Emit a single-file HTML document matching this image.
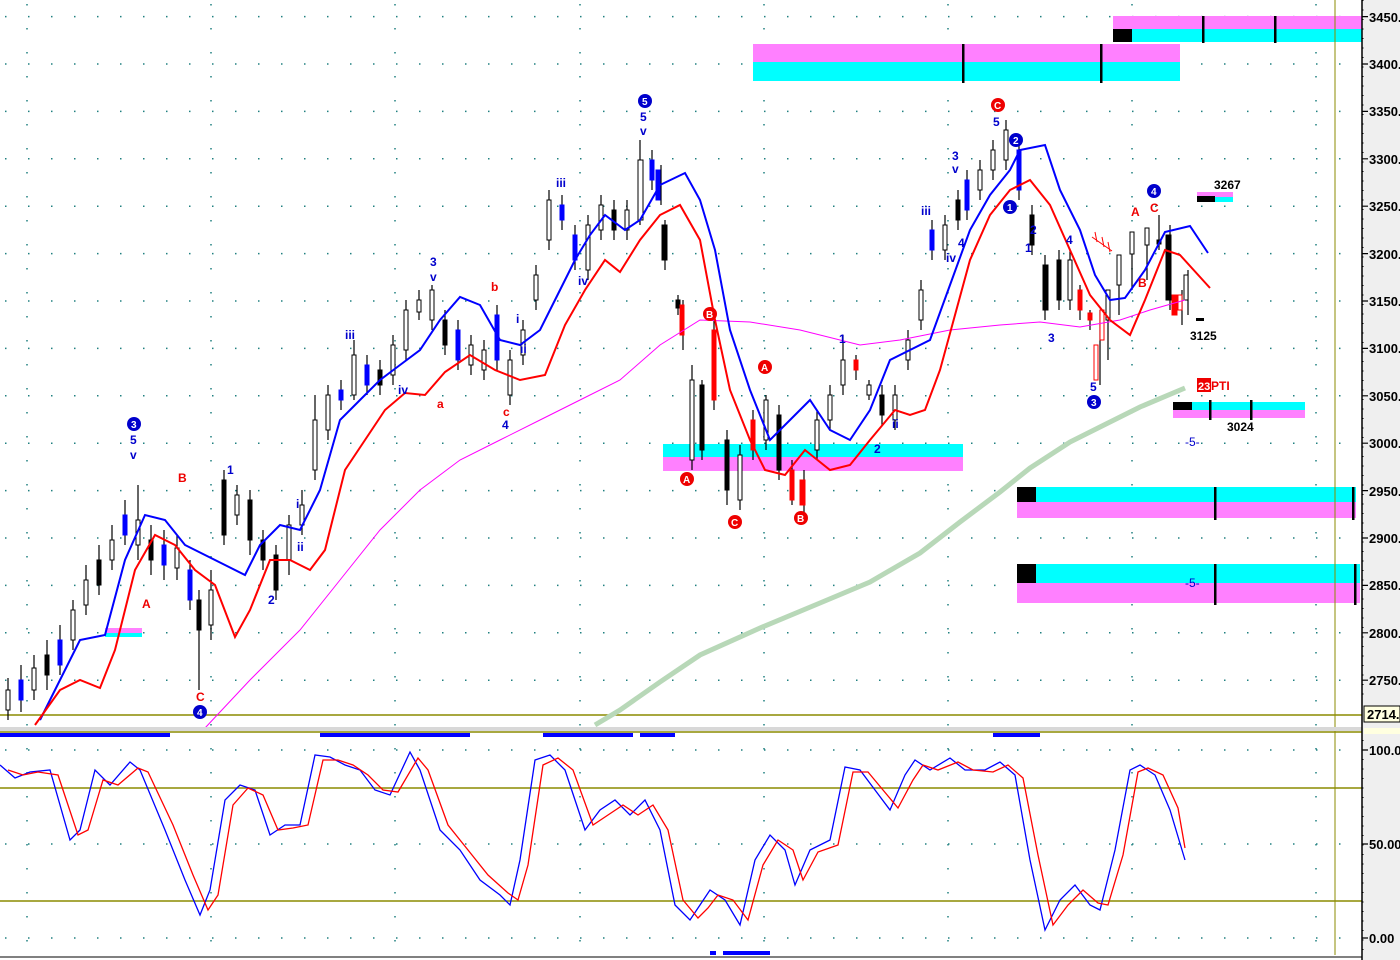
<!DOCTYPE html>
<html><head><meta charset="utf-8">
<style>
html,body{margin:0;padding:0;background:#fff;}
svg{display:block;font-family:"Liberation Sans",Arial,sans-serif;}
.ax{font-size:13px;font-weight:bold;fill:#000;}
.lb{font-size:12px;font-weight:bold;}
</style></head>
<body>
<svg width="1400" height="960" viewBox="0 0 1400 960" xmlns="http://www.w3.org/2000/svg">
<rect width="1400" height="960" fill="#fff"/>
<g stroke="#208080" stroke-width="1.5" stroke-dasharray="1.5 21.5">
<line x1="5" y1="16.6" x2="1362" y2="16.6"/><line x1="5" y1="64" x2="1362" y2="64"/><line x1="5" y1="111.4" x2="1362" y2="111.4"/><line x1="5" y1="158.8" x2="1362" y2="158.8"/><line x1="5" y1="206.2" x2="1362" y2="206.2"/><line x1="5" y1="253.6" x2="1362" y2="253.6"/><line x1="5" y1="301" x2="1362" y2="301"/><line x1="5" y1="348.4" x2="1362" y2="348.4"/><line x1="5" y1="395.8" x2="1362" y2="395.8"/><line x1="5" y1="443.2" x2="1362" y2="443.2"/><line x1="5" y1="490.6" x2="1362" y2="490.6"/><line x1="5" y1="538" x2="1362" y2="538"/><line x1="5" y1="585.4" x2="1362" y2="585.4"/><line x1="5" y1="632.8" x2="1362" y2="632.8"/><line x1="5" y1="680.2" x2="1362" y2="680.2"/>
<line x1="5" y1="750" x2="1362" y2="750"/><line x1="5" y1="844" x2="1362" y2="844"/><line x1="5" y1="938" x2="1362" y2="938"/>
</g>
<g stroke="#208080" stroke-width="1.5" stroke-dasharray="1.5 22.5">
<line x1="27" y1="4" x2="27" y2="955"/><line x1="211" y1="4" x2="211" y2="955"/><line x1="395" y1="4" x2="395" y2="955"/><line x1="580" y1="4" x2="580" y2="955"/><line x1="764" y1="4" x2="764" y2="955"/><line x1="948" y1="4" x2="948" y2="955"/><line x1="1132" y1="4" x2="1132" y2="955"/><line x1="1316" y1="4" x2="1316" y2="955"/>
</g>
<!-- zones -->
<rect x="1113" y="16" width="249" height="13" fill="#ff80ff"/><rect x="1113" y="29" width="249" height="13" fill="#00ffff"/><rect x="1113" y="29" width="19" height="13" fill="#000"/>
<rect x="1202" y="16" width="2.5" height="27" fill="#000"/><rect x="1274" y="16" width="2.5" height="27" fill="#000"/>
<rect x="753" y="44" width="427" height="18" fill="#ff80ff"/><rect x="753" y="62" width="427" height="19" fill="#00ffff"/>
<rect x="962" y="44" width="2.5" height="39" fill="#000"/><rect x="1100" y="44" width="2.5" height="39" fill="#000"/>
<rect x="663" y="444" width="300" height="13" fill="#00ffff"/><rect x="663" y="457" width="300" height="14" fill="#ff80ff"/>
<rect x="1017" y="487" width="339" height="15" fill="#00ffff"/><rect x="1017" y="502" width="339" height="16" fill="#ff80ff"/><rect x="1017" y="487" width="19" height="15" fill="#000"/>
<rect x="1214" y="487" width="2.5" height="33" fill="#000"/><rect x="1352" y="487" width="2.5" height="33" fill="#000"/>
<rect x="1017" y="564" width="343" height="19" fill="#00ffff"/><rect x="1017" y="583" width="343" height="20" fill="#ff80ff"/><rect x="1017" y="564" width="19" height="19" fill="#000"/>
<rect x="1214" y="564" width="2.5" height="41" fill="#000"/><rect x="1354" y="564" width="2.5" height="41" fill="#000"/>
<rect x="1173" y="402" width="132" height="8" fill="#00ffff"/><rect x="1173" y="410" width="132" height="8" fill="#ff80ff"/><rect x="1173" y="402" width="19" height="8" fill="#000"/>
<rect x="1209" y="400" width="2.5" height="20" fill="#000"/><rect x="1250" y="400" width="2.5" height="20" fill="#000"/>
<rect x="1197" y="192" width="36" height="5" fill="#ff80ff"/><rect x="1197" y="197" width="36" height="5" fill="#00ffff"/><rect x="1197" y="196" width="18" height="6" fill="#000"/>
<rect x="1196" y="318" width="8" height="3" fill="#000"/>
<rect x="105" y="628" width="37" height="5" fill="#ff80ff"/><rect x="105" y="633" width="37" height="4" fill="#00ffff"/>
<line x1="0" y1="715" x2="1362" y2="715" stroke="#8b8b00" stroke-width="1.5"/>
<line x1="0" y1="788" x2="1362" y2="788" stroke="#8b8b00" stroke-width="1.5"/>
<line x1="0" y1="901" x2="1362" y2="901" stroke="#8b8b00" stroke-width="1.5"/>
<line x1="1335" y1="0" x2="1335" y2="955" stroke="#8b8b00" stroke-width="1"/>
<!-- candles: wicks -->
<path fill="none" stroke="#000" stroke-width="1.2" d="M8 678V720M21 665V712M34 655V700M47 640V690M60 625V675M73 600V650M86 565V615M99 545V595M112 525V570M125 500V545M138 485V560M151 525V575M164 530V580M177 535V580M190 560V610M199 590V690M211 570V640M224 470V545M237 485V525M250 490V555M263 530V570M276 545V600M289 515V575M302 490V535M315 395V480M328 385V440M341 380V410M354 340V400M367 355V395M380 360V395M393 335V385M406 300V360M419 290V320M432 285V330M445 310V355M458 320V370M471 335V375M484 340V380M497 305V370M510 350V405M523 320V365M536 265V310M549 190V250M562 195V230M575 225V270M588 215V280M601 195V240M614 200V240M627 200V240M640 140V225M652 150V190M661 165V205M665 220V270M678 295V315M683 300V350M692 365V470M702 380V460M714 320V410M727 430V505M740 445V510M753 410V460M766 395V450M779 405V480M792 460V505M804 470V520M817 410V460M830 385V430M843 335V395M856 355V380M869 380V400M882 385V425M895 385V430M908 330V370M921 280V330M932 220V260M945 215V260M958 190V230M967 170V220M980 160V200M993 140V180M1006 120V170M1019 140V200M1032 205V255M1045 255V320M1059 250V310M1070 250V310M1080 285V320M1090 310V330M1100 310V385M1108 310V360M1119 270V315M1132 240V290M1147 235V280M1159 215V250M1170 225V310M1182 290V325M1188 270V315"/>
<g stroke="#000" stroke-width="1">
<rect x="6" y="690" width="4" height="20" fill="#fff"/><rect x="19" y="680" width="4" height="20" fill="#00f" stroke="#00f"/><rect x="32" y="668" width="4" height="22" fill="#fff"/><rect x="45" y="655" width="4" height="20" fill="#000"/><rect x="58" y="640" width="4" height="25" fill="#00f" stroke="#00f"/><rect x="71" y="610" width="4" height="30" fill="#fff"/><rect x="84" y="580" width="4" height="25" fill="#fff"/><rect x="97" y="560" width="4" height="25" fill="#000"/><rect x="110" y="540" width="4" height="20" fill="#fff"/><rect x="123" y="515" width="4" height="20" fill="#00f" stroke="#00f"/><rect x="136" y="520" width="4" height="25" fill="#fff"/><rect x="149" y="540" width="4" height="20" fill="#000"/><rect x="162" y="545" width="4" height="20" fill="#00f" stroke="#00f"/><rect x="175" y="548" width="4" height="20" fill="#fff"/><rect x="188" y="570" width="4" height="30" fill="#00f" stroke="#00f"/><rect x="197" y="600" width="4" height="30" fill="#000"/><rect x="209" y="590" width="4" height="35" fill="#fff"/><rect x="222" y="480" width="4" height="55" fill="#000"/><rect x="235" y="495" width="4" height="20" fill="#fff"/><rect x="248" y="500" width="4" height="40" fill="#000"/><rect x="261" y="540" width="4" height="20" fill="#000"/><rect x="274" y="555" width="4" height="35" fill="#000"/><rect x="287" y="525" width="4" height="35" fill="#fff"/><rect x="300" y="505" width="4" height="20" fill="#fff"/><rect x="313" y="420" width="4" height="50" fill="#fff"/><rect x="326" y="395" width="4" height="35" fill="#fff"/><rect x="339" y="390" width="4" height="10" fill="#00f" stroke="#00f"/><rect x="352" y="355" width="4" height="40" fill="#fff"/><rect x="365" y="365" width="4" height="20" fill="#00f" stroke="#00f"/><rect x="378" y="370" width="4" height="15" fill="#000"/><rect x="391" y="345" width="4" height="30" fill="#fff"/><rect x="404" y="310" width="4" height="40" fill="#fff"/><rect x="417" y="300" width="4" height="12" fill="#fff"/><rect x="430" y="290" width="4" height="30" fill="#fff"/><rect x="443" y="320" width="4" height="25" fill="#000"/><rect x="456" y="330" width="4" height="30" fill="#00f" stroke="#00f"/><rect x="469" y="345" width="4" height="20" fill="#fff"/><rect x="482" y="350" width="4" height="20" fill="#fff"/><rect x="495" y="315" width="4" height="45" fill="#00f" stroke="#00f"/><rect x="508" y="360" width="4" height="35" fill="#fff"/><rect x="521" y="330" width="4" height="25" fill="#fff"/><rect x="534" y="275" width="4" height="25" fill="#fff"/><rect x="547" y="200" width="4" height="40" fill="#fff"/><rect x="560" y="205" width="4" height="15" fill="#00f" stroke="#00f"/><rect x="573" y="235" width="4" height="25" fill="#00f" stroke="#00f"/><rect x="586" y="225" width="4" height="45" fill="#fff"/><rect x="599" y="205" width="4" height="25" fill="#fff"/><rect x="612" y="210" width="4" height="20" fill="#000"/><rect x="625" y="210" width="4" height="20" fill="#fff"/><rect x="638" y="160" width="5" height="60" fill="#fff"/><rect x="650" y="160" width="4" height="20" fill="#00f" stroke="#00f"/><rect x="656" y="170" width="4" height="30" fill="#00f" stroke="#00f"/><rect x="662" y="225" width="5" height="35" fill="#000"/><rect x="676" y="300" width="4" height="8" fill="#000"/><rect x="680" y="305" width="4" height="30" fill="#f00" stroke="#f00"/><rect x="690" y="380" width="4" height="80" fill="#fff"/><rect x="700" y="385" width="4" height="65" fill="#000"/><rect x="712" y="330" width="4" height="70" fill="#f00" stroke="#f00"/><rect x="725" y="440" width="4" height="50" fill="#000"/><rect x="738" y="455" width="4" height="45" fill="#fff"/><rect x="751" y="420" width="4" height="30" fill="#f00" stroke="#f00"/><rect x="764" y="400" width="4" height="40" fill="#fff"/><rect x="777" y="415" width="4" height="55" fill="#000"/><rect x="790" y="470" width="4" height="30" fill="#f00" stroke="#f00"/><rect x="800" y="480" width="5" height="25" fill="#f00" stroke="#f00"/><rect x="815" y="420" width="4" height="30" fill="#fff"/><rect x="828" y="395" width="4" height="25" fill="#fff"/><rect x="841" y="360" width="4" height="25" fill="#fff"/><rect x="854" y="360" width="4" height="10" fill="#f00" stroke="#f00"/><rect x="867" y="385" width="4" height="10" fill="#fff"/><rect x="880" y="395" width="4" height="20" fill="#000"/><rect x="893" y="395" width="4" height="25" fill="#fff"/><rect x="906" y="340" width="4" height="20" fill="#fff"/><rect x="919" y="290" width="4" height="30" fill="#fff"/><rect x="930" y="230" width="4" height="20" fill="#00f" stroke="#00f"/><rect x="943" y="225" width="4" height="25" fill="#fff"/><rect x="956" y="200" width="4" height="20" fill="#000"/><rect x="965" y="180" width="4" height="30" fill="#00f" stroke="#00f"/><rect x="978" y="170" width="4" height="20" fill="#fff"/><rect x="991" y="150" width="4" height="20" fill="#fff"/><rect x="1004" y="130" width="4" height="30" fill="#fff"/><rect x="1017" y="150" width="4" height="40" fill="#00f" stroke="#00f"/><rect x="1030" y="215" width="4" height="30" fill="#000"/><rect x="1043" y="265" width="5" height="45" fill="#000"/><rect x="1057" y="260" width="4" height="40" fill="#000"/><rect x="1068" y="260" width="4" height="40" fill="#fff"/><rect x="1078" y="290" width="4" height="20" fill="#f00" stroke="#f00"/><rect x="1088" y="313" width="4" height="7" fill="#f00" stroke="#f00"/><rect x="1094" y="345" width="4" height="35" fill="#fff" stroke="#f00"/><rect x="1100" y="310" width="4" height="30" fill="#fff" stroke="#f00"/><rect x="1106" y="290" width="4" height="30" fill="#fff"/><rect x="1117" y="255" width="4" height="30" fill="#fff"/><rect x="1130" y="232" width="4" height="22" fill="#fff"/><rect x="1145" y="228" width="4" height="17" fill="#fff"/><rect x="1157" y="240" width="4" height="4" fill="#000"/><rect x="1166" y="235" width="5" height="65" fill="#000"/><rect x="1172" y="295" width="5" height="20" fill="#f00" stroke="#f00"/><rect x="1178" y="295" width="4" height="15" fill="#fff" stroke="#f00"/><rect x="1184" y="275" width="4" height="25" fill="#fff"/>
</g>
<polyline fill="none" stroke="#b8d8b8" stroke-width="5" points="595,725 620,710 660,682 700,655 760,628 820,603 870,582 920,553 960,522 1000,492 1030,468 1070,442 1100,427 1140,407 1185,388"/>
<polyline fill="none" stroke="#ff00ff" stroke-width="1" points="205,728 250,680 300,630 340,580 380,530 420,490 460,460 500,440 540,420 580,400 620,380 660,345 700,320 750,322 800,330 860,345 900,340 950,330 1000,325 1040,322 1080,327 1120,320 1150,310 1185,300"/>
<polyline fill="none" stroke="#0000ff" stroke-width="2" points="40,720 60,680 80,640 105,635 125,560 145,515 165,520 185,545 205,555 225,565 245,575 260,545 280,525 300,530 320,490 340,420 360,400 380,380 400,365 420,350 440,320 460,297 480,305 500,340 520,345 540,330 555,300 575,260 590,235 605,215 625,230 640,220 660,185 685,173 700,200 715,250 730,330 750,390 770,440 790,420 810,400 830,430 850,440 870,410 890,360 910,350 930,340 950,285 970,230 990,195 1010,170 1020,150 1045,145 1060,190 1080,230 1095,275 1110,300 1125,298 1145,270 1165,232 1190,226 1208,253"/>
<polyline fill="none" stroke="#ff0000" stroke-width="2" points="35,725 60,690 80,680 100,688 115,650 135,570 155,535 175,545 195,570 215,585 235,637 250,610 270,560 290,560 310,570 325,550 345,470 365,440 385,410 405,393 425,395 445,372 470,355 495,370 520,380 545,375 565,325 585,290 605,260 620,272 640,240 660,215 680,205 700,240 715,320 730,390 750,440 765,470 785,475 805,450 830,470 850,465 870,440 895,410 910,415 925,410 940,370 955,315 970,260 990,215 1010,190 1030,180 1050,205 1070,250 1090,295 1110,320 1130,335 1145,300 1165,250 1180,255 1210,288"/>
<path d="M1092 237l20 14M1095 232l2 10M1102 237l2 10M1108 242l2 10" stroke="#f00" stroke-width="1" fill="none"/>
<rect x="0" y="727" width="1362" height="4" fill="#d8d8d8"/>
<line x1="0" y1="732" x2="1362" y2="732" stroke="#8b8b00" stroke-width="1.5"/>
<g fill="#0000ff"><rect x="0" y="733" width="170" height="4"/><rect x="320" y="733" width="150" height="4"/><rect x="543" y="733" width="90" height="4"/><rect x="640" y="733" width="35" height="4"/><rect x="993" y="733" width="47" height="4"/><rect x="710" y="951" width="6" height="4"/><rect x="723" y="951" width="47" height="4"/></g>
<polyline fill="none" stroke="#0000ff" stroke-width="1.3" points="0,765 15,778 30,772 50,770 70,840 80,830 95,770 110,785 130,762 140,770 165,830 185,880 200,915 210,890 225,800 240,785 255,790 270,835 285,825 300,825 315,755 330,757 345,765 360,770 375,790 390,795 410,752 420,770 440,830 460,850 480,880 500,895 510,905 520,860 535,760 550,755 565,770 585,830 600,810 615,800 630,815 645,800 660,830 675,905 690,920 700,905 710,890 725,900 740,925 755,860 770,835 785,850 795,885 810,850 830,840 845,767 860,770 875,790 890,810 905,775 915,760 930,770 950,758 965,770 985,770 1000,762 1015,775 1030,860 1045,930 1060,900 1075,885 1090,905 1100,910 1115,850 1130,770 1140,765 1155,775 1170,810 1185,860"/>
<polyline fill="none" stroke="#ff0000" stroke-width="1.3" transform="translate(8,0)" points="0,770 15,775 30,772 50,775 70,835 80,830 95,780 110,785 130,768 140,772 165,825 185,875 200,910 210,895 225,805 240,788 255,795 270,830 285,828 300,825 315,760 330,760 345,765 360,775 375,790 390,792 410,758 420,770 440,825 460,850 480,875 500,893 510,900 520,865 535,765 550,758 565,770 585,825 600,815 615,805 630,815 645,805 660,830 675,900 690,918 700,908 710,895 725,900 740,920 755,865 770,840 785,850 795,880 810,852 830,845 845,772 860,772 875,790 890,808 905,780 915,765 930,770 950,762 965,770 985,772 1000,765 1015,778 1030,855 1045,925 1060,905 1075,890 1090,903 1100,905 1115,855 1130,772 1140,768 1155,775 1170,808 1177,848"/>
<!-- axis -->
<rect x="1362" y="0" width="38" height="960" fill="#efefef"/>
<line x1="1362" y1="0" x2="1362" y2="960" stroke="#000" stroke-width="1.5"/>
<g stroke="#000" stroke-width="1" stroke-dasharray="1 8.5"><line x1="1363" y1="0" x2="1363" y2="700"/><line x1="1363" y1="740" x2="1363" y2="950"/></g>
<g stroke="#000" stroke-width="1.2"><path d="M1362 16.6h6M1362 64h6M1362 111.4h6M1362 158.8h6M1362 206.2h6M1362 253.6h6M1362 301h6M1362 348.4h6M1362 395.8h6M1362 443.2h6M1362 490.6h6M1362 538h6M1362 585.4h6M1362 632.8h6M1362 680.2h6M1362 750h6M1362 844h6M1362 938h6"/></g>
<g class="ax">
<text x="1369" y="22">3450.</text><text x="1369" y="69">3400.</text><text x="1369" y="116">3350.</text><text x="1369" y="164">3300.</text><text x="1369" y="211">3250.</text><text x="1369" y="259">3200.</text><text x="1369" y="306">3150.</text><text x="1369" y="353">3100.</text><text x="1369" y="401">3050.</text><text x="1369" y="448">3000.</text><text x="1369" y="496">2950.</text><text x="1369" y="543">2900.</text><text x="1369" y="590">2850.</text><text x="1369" y="638">2800.</text><text x="1369" y="685">2750.</text>
<text x="1369" y="755">100.0</text><text x="1369" y="849">50.00</text><text x="1369" y="943">0.00</text>
</g>
<rect x="1364" y="706" width="36" height="16" fill="#ffffe0" stroke="#000"/>
<text x="1367" y="719" class="ax">2714.</text>
<rect x="1364" y="728" width="36" height="6" fill="#ffffe0"/>
<line x1="0" y1="957" x2="1362" y2="957" stroke="#000" stroke-width="1"/>
<g class="lb">
<g fill="#0000cc">
<circle cx="134" cy="424" r="7"/><circle cx="200" cy="712" r="7"/><circle cx="645" cy="101" r="7"/><circle cx="1016" cy="140" r="7"/><circle cx="1010" cy="207" r="7"/><circle cx="1154" cy="191" r="7"/><circle cx="1094" cy="402" r="7"/>
<text x="130" y="444">5</text><text x="130" y="459">v</text><text x="640" y="121">5</text><text x="640" y="135">v</text>
<text x="227" y="474">1</text><text x="268" y="604">2</text><text x="296" y="508">i</text><text x="297" y="551">ii</text><text x="345" y="339">iii</text><text x="398" y="394">iv</text><text x="430" y="266">3</text><text x="430" y="281">v</text><text x="502" y="429">4</text><text x="516" y="323">i</text><text x="520" y="353">ii</text><text x="556" y="187">iii</text><text x="578" y="285">iv</text>
<text x="839" y="343">1</text><text x="874" y="453">2</text><text x="892" y="428">ii</text><text x="921" y="215">iii</text><text x="946" y="262">iv</text><text x="952" y="160">3</text><text x="952" y="173">v</text><text x="958" y="247">4</text><text x="993" y="126">5</text><text x="1025" y="252">1</text><text x="1030" y="234">2</text><text x="1048" y="342">3</text><text x="1066" y="244">4</text><text x="1090" y="391">5</text><text x="1185" y="446" font-weight="normal">-5-</text><text x="1185" y="587" font-weight="normal">-5-</text>
</g>
<g fill="#fff" font-size="10"><text x="131" y="428">3</text><text x="197" y="716">4</text><text x="642" y="105">5</text><text x="1013" y="144">2</text><text x="1007" y="211">1</text><text x="1151" y="195">4</text><text x="1091" y="406">3</text></g>
<g fill="#ee0000">
<circle cx="687" cy="479" r="7"/><circle cx="735" cy="522" r="7"/><circle cx="801" cy="518" r="7"/><circle cx="765" cy="367" r="7"/><circle cx="710" cy="314" r="7"/><circle cx="998" cy="105" r="7"/>
<text x="178" y="482">B</text><text x="142" y="608">A</text><text x="196" y="701">C</text><text x="437" y="408">a</text><text x="491" y="291">b</text><text x="503" y="416">c</text>
<text x="1131" y="216">A</text><text x="1150" y="212">C</text><text x="1138" y="287">B</text>
<rect x="1197" y="378" width="14" height="14"/><text x="1211" y="390">PTI</text>
</g>
<g fill="#fff" font-size="10"><text x="683" y="483">A</text><text x="731" y="526">C</text><text x="797" y="522">B</text><text x="761" y="371">A</text><text x="706" y="318">B</text><text x="994" y="109">C</text><text x="1198" y="390" font-size="11">23</text></g>
<g fill="#000"><text x="1214" y="189">3267</text><text x="1190" y="340">3125</text><text x="1227" y="431">3024</text></g>
</g>
</svg>
</body></html>
